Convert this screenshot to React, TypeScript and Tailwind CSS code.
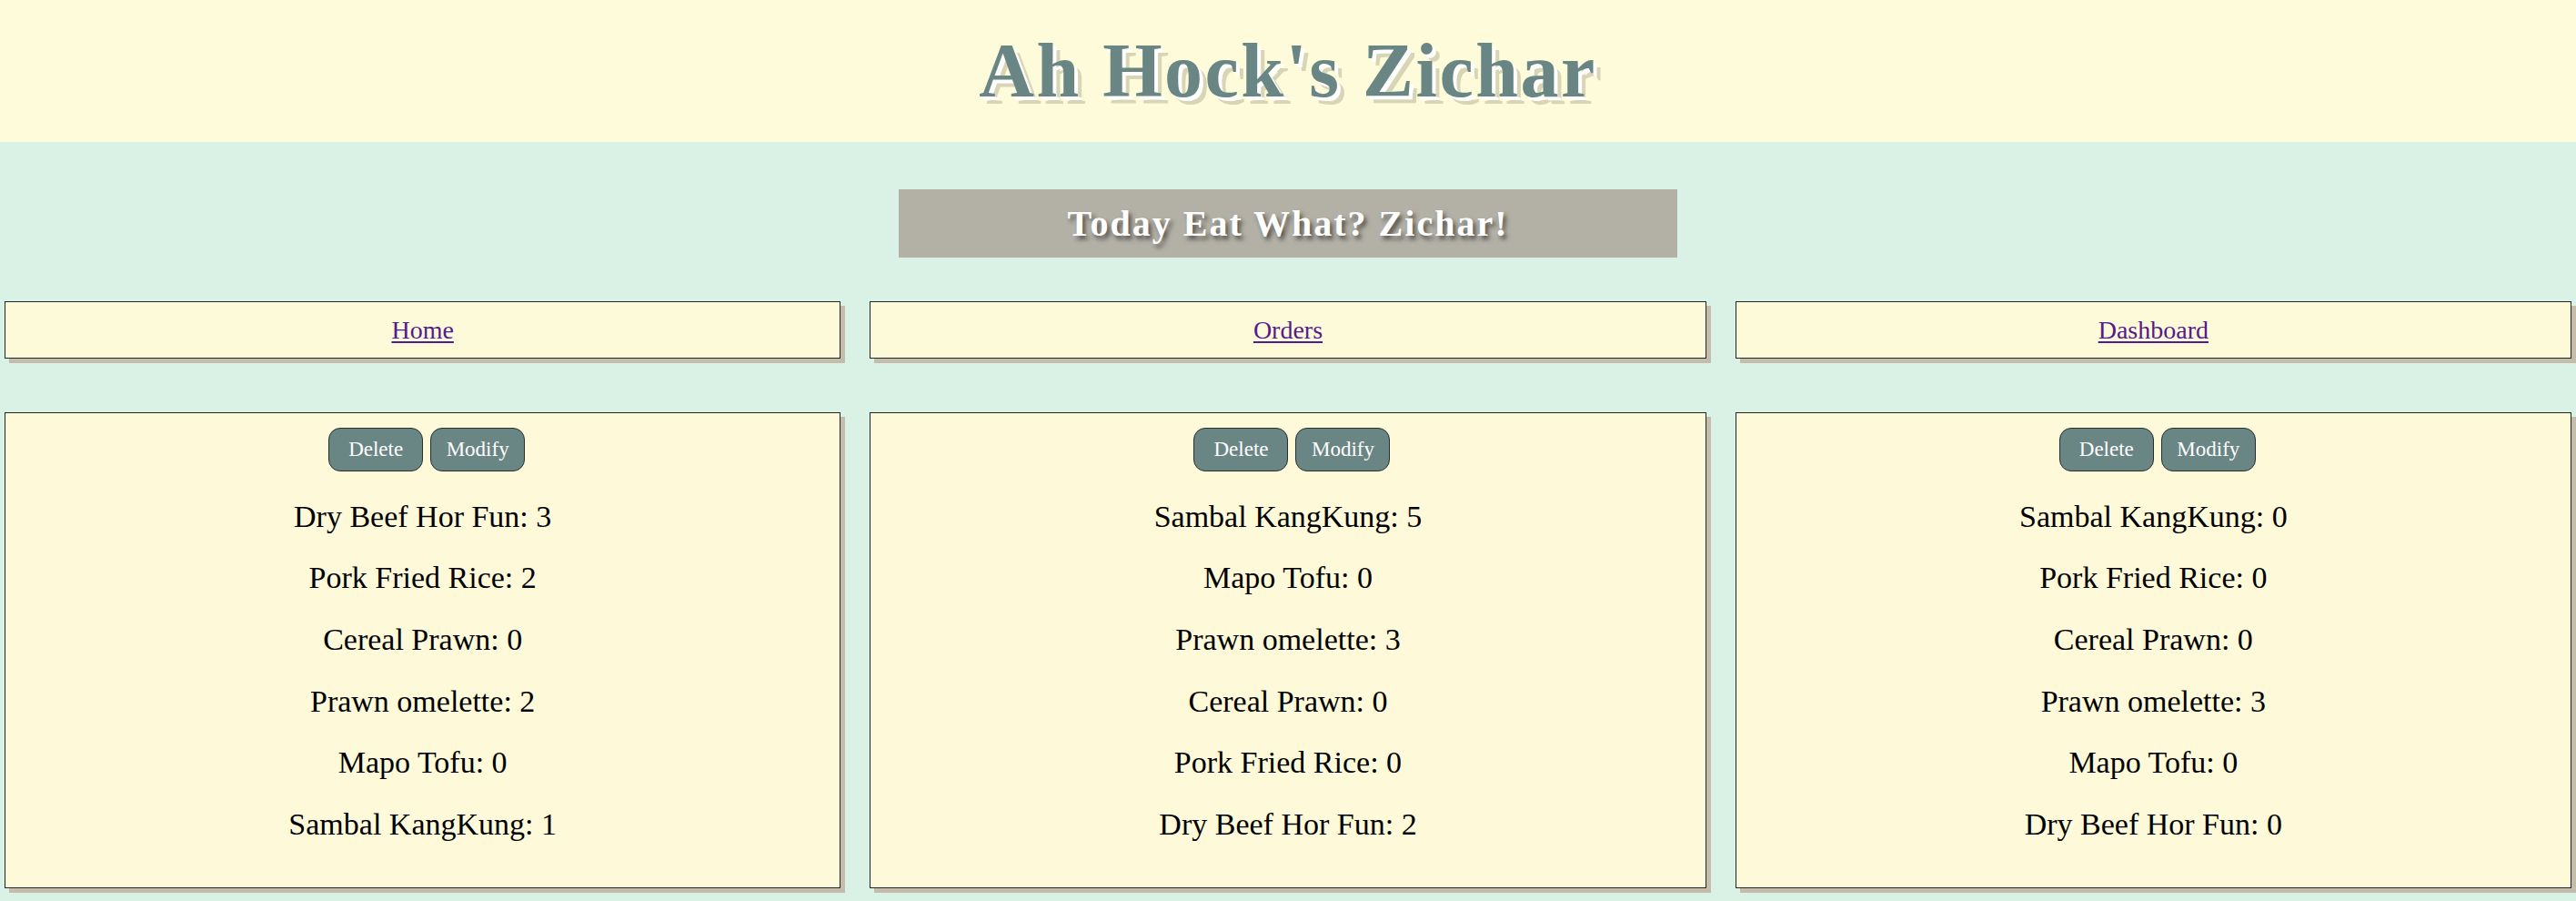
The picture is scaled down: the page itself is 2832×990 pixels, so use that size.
import React from "react";

const columns: string[][] = [
  [
    "Dry Beef Hor Fun: 3",
    "Pork Fried Rice: 2",
    "Cereal Prawn: 0",
    "Prawn omelette: 2",
    "Mapo Tofu: 0",
    "Sambal KangKung: 1",
  ],
  [
    "Sambal KangKung: 5",
    "Mapo Tofu: 0",
    "Prawn omelette: 3",
    "Cereal Prawn: 0",
    "Pork Fried Rice: 0",
    "Dry Beef Hor Fun: 2",
  ],
  [
    "Sambal KangKung: 0",
    "Pork Fried Rice: 0",
    "Cereal Prawn: 0",
    "Prawn omelette: 3",
    "Mapo Tofu: 0",
    "Dry Beef Hor Fun: 0",
  ],
];

const navs = ["Home", "Orders", "Dashboard"];

export default function App() {
  return (
    <div className="min-h-screen bg-[#daf2e5] font-['Liberation_Serif',serif] text-black">
      <header className="bg-[#fdfbd9] pt-[31px] pb-[31px] text-center">
        <h1 className="text-[84px] leading-[94px] font-bold tracking-[2.5px] text-[#698584] [text-shadow:4px_4px_0_#ffffff,8px_8px_0_#d8d5b7]">
          Ah Hock's Zichar
        </h1>
      </header>

      <div className="flex justify-center pt-[52px]">
        <div className="w-[856px] h-[75px] bg-[#b3b1a6] text-center text-[40px] leading-[75px] font-bold tracking-[2px] text-white [text-shadow:3px_4px_5px_rgba(0,0,0,0.55)]">
          Today Eat What? Zichar!
        </div>
      </div>

      <nav className="grid grid-cols-3 gap-[32px] px-[5px] pt-[48px]">
        {navs.map((n) => (
          <div
            key={n}
            className="h-[63px] border border-[#1d2826] bg-[#fdfad9] text-center shadow-[5px_5px_0_#c5bcac]"
          >
            <a
              href="#"
              className="text-[28px] leading-[61px] text-[#551a8b] underline decoration-2 underline-offset-[3px]"
            >
              {n}
            </a>
          </div>
        ))}
      </nav>

      <section className="grid grid-cols-3 gap-[32px] px-[5px] pt-[59px]">
        {columns.map((items, i) => (
          <div
            key={i}
            className="flex flex-col items-center border border-[#1d2826] bg-[#fefad9] pt-[16px] pb-[51px] shadow-[5px_5px_0_#c5bcac]"
          >
            <div className="flex gap-[8px] pl-[9px]">
              <button className="w-[104px] h-[48px] rounded-[13px] border border-[#26302f] bg-[#698584] text-[23px] text-white">
                Delete
              </button>
              <button className="w-[104px] h-[48px] rounded-[13px] border border-[#26302f] bg-[#698584] text-[23px] text-white">
                Modify
              </button>
            </div>
            <div className="mt-[31.5px] flex flex-col items-center gap-[31.7px]">
              {items.map((t) => (
                <p key={t} className="text-[34px] leading-[36px]">
                  {t}
                </p>
              ))}
            </div>
          </div>
        ))}
      </section>
    </div>
  );
}
